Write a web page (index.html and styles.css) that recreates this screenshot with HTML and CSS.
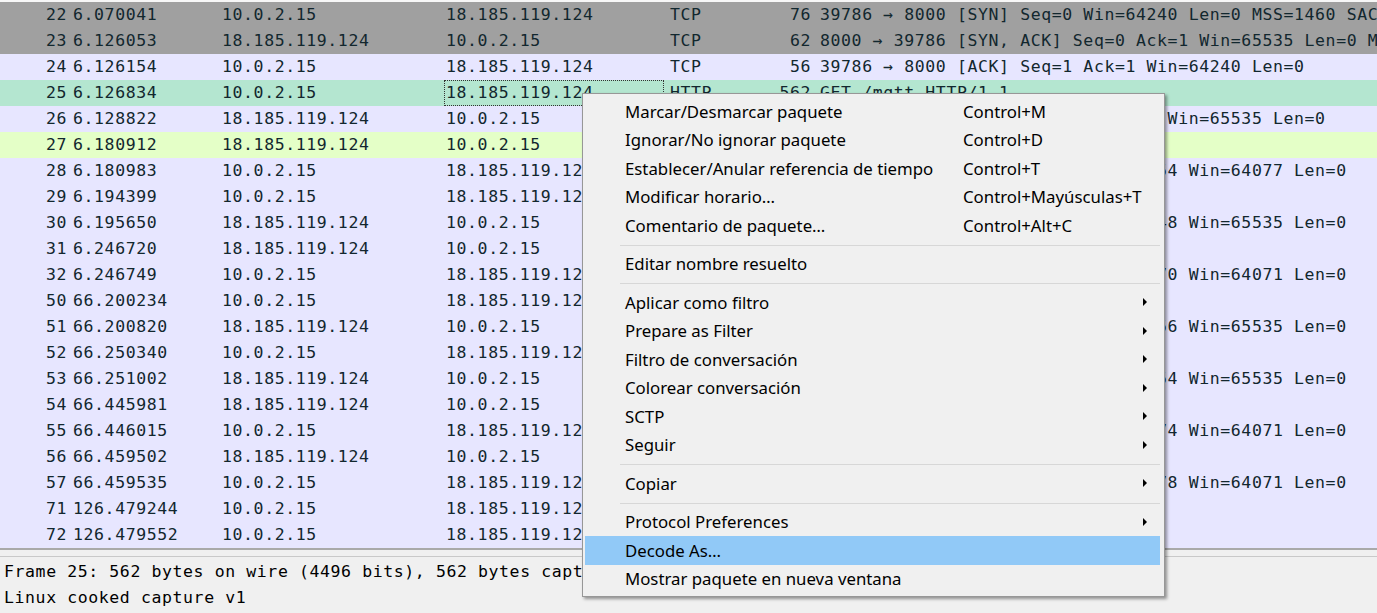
FILE: index.html
```html
<!DOCTYPE html>
<html lang="es">
<head>
<meta charset="utf-8">
<title>Wireshark</title>
<link rel="stylesheet" href="styles.css">
</head>
<body>
<div class="app">
  <div class="list-header"></div>
  <div class="list">
    <div class="row gray"><span class="c-no">22</span><span class="c-time">6.070041</span><span class="c-src">10.0.2.15</span><span class="c-dst">18.185.119.124</span><span class="c-proto">TCP</span><span class="c-len">76</span><span class="c-info">39786 → 8000 [SYN] Seq=0 Win=64240 Len=0 MSS=1460 SACK_PERM=1 TSval=3027401590 TSecr=0 WS=128</span></div>
    <div class="row gray"><span class="c-no">23</span><span class="c-time">6.126053</span><span class="c-src">18.185.119.124</span><span class="c-dst">10.0.2.15</span><span class="c-proto">TCP</span><span class="c-len">62</span><span class="c-info">8000 → 39786 [SYN, ACK] Seq=0 Ack=1 Win=65535 Len=0 MSS=1460</span></div>
    <div class="row tcp"><span class="c-no">24</span><span class="c-time">6.126154</span><span class="c-src">10.0.2.15</span><span class="c-dst">18.185.119.124</span><span class="c-proto">TCP</span><span class="c-len">56</span><span class="c-info">39786 → 8000 [ACK] Seq=1 Ack=1 Win=64240 Len=0</span></div>
    <div class="row selected"><span class="c-no">25</span><span class="c-time">6.126834</span><span class="c-src">10.0.2.15</span><span class="c-dst focus">18.185.119.124</span><span class="c-proto">HTTP</span><span class="c-len">562</span><span class="c-info">GET /mqtt HTTP/1.1</span></div>
    <div class="row tcp"><span class="c-no">26</span><span class="c-time">6.128822</span><span class="c-src">18.185.119.124</span><span class="c-dst">10.0.2.15</span><span class="c-proto">TCP</span><span class="c-len">54</span><span class="c-info">8000 → 39786 [ACK] Seq=1 Ack=507 Win=65535 Len=0</span></div>
    <div class="row http"><span class="c-no">27</span><span class="c-time">6.180912</span><span class="c-src">18.185.119.124</span><span class="c-dst">10.0.2.15</span><span class="c-proto">HTTP</span><span class="c-len">207</span><span class="c-info">HTTP/1.1 101 Switching Protocols</span></div>
    <div class="row tcp"><span class="c-no">28</span><span class="c-time">6.180983</span><span class="c-src">10.0.2.15</span><span class="c-dst">18.185.119.124</span><span class="c-proto">TCP</span><span class="c-len">56</span><span class="c-info">39786 → 8000 [ACK] Seq=507 Ack=154 Win=64077 Len=0</span></div>
    <div class="row tcp"><span class="c-no">29</span><span class="c-time">6.194399</span><span class="c-src">10.0.2.15</span><span class="c-dst">18.185.119.124</span><span class="c-proto">MQTT</span><span class="c-len">97</span><span class="c-info">Connect Command</span></div>
    <div class="row tcp"><span class="c-no">30</span><span class="c-time">6.195650</span><span class="c-src">18.185.119.124</span><span class="c-dst">10.0.2.15</span><span class="c-proto">TCP</span><span class="c-len">54</span><span class="c-info">8000 → 39786 [ACK] Seq=154 Ack=548 Win=65535 Len=0</span></div>
    <div class="row tcp"><span class="c-no">31</span><span class="c-time">6.246720</span><span class="c-src">18.185.119.124</span><span class="c-dst">10.0.2.15</span><span class="c-proto">MQTT</span><span class="c-len">70</span><span class="c-info">Connect Ack</span></div>
    <div class="row tcp"><span class="c-no">32</span><span class="c-time">6.246749</span><span class="c-src">10.0.2.15</span><span class="c-dst">18.185.119.124</span><span class="c-proto">TCP</span><span class="c-len">56</span><span class="c-info">39786 → 8000 [ACK] Seq=548 Ack=170 Win=64071 Len=0</span></div>
    <div class="row tcp"><span class="c-no">50</span><span class="c-time">66.200234</span><span class="c-src">10.0.2.15</span><span class="c-dst">18.185.119.124</span><span class="c-proto">MQTT</span><span class="c-len">64</span><span class="c-info">Ping Request</span></div>
    <div class="row tcp"><span class="c-no">51</span><span class="c-time">66.200820</span><span class="c-src">18.185.119.124</span><span class="c-dst">10.0.2.15</span><span class="c-proto">TCP</span><span class="c-len">54</span><span class="c-info">8000 → 39786 [ACK] Seq=170 Ack=556 Win=65535 Len=0</span></div>
    <div class="row tcp"><span class="c-no">52</span><span class="c-time">66.250340</span><span class="c-src">10.0.2.15</span><span class="c-dst">18.185.119.124</span><span class="c-proto">MQTT</span><span class="c-len">64</span><span class="c-info">Ping Request</span></div>
    <div class="row tcp"><span class="c-no">53</span><span class="c-time">66.251002</span><span class="c-src">18.185.119.124</span><span class="c-dst">10.0.2.15</span><span class="c-proto">TCP</span><span class="c-len">54</span><span class="c-info">8000 → 39786 [ACK] Seq=170 Ack=654 Win=65535 Len=0</span></div>
    <div class="row tcp"><span class="c-no">54</span><span class="c-time">66.445981</span><span class="c-src">18.185.119.124</span><span class="c-dst">10.0.2.15</span><span class="c-proto">MQTT</span><span class="c-len">58</span><span class="c-info">Ping Response</span></div>
    <div class="row tcp"><span class="c-no">55</span><span class="c-time">66.446015</span><span class="c-src">10.0.2.15</span><span class="c-dst">18.185.119.124</span><span class="c-proto">TCP</span><span class="c-len">56</span><span class="c-info">39786 → 8000 [ACK] Seq=654 Ack=174 Win=64071 Len=0</span></div>
    <div class="row tcp"><span class="c-no">56</span><span class="c-time">66.459502</span><span class="c-src">18.185.119.124</span><span class="c-dst">10.0.2.15</span><span class="c-proto">MQTT</span><span class="c-len">58</span><span class="c-info">Ping Response</span></div>
    <div class="row tcp"><span class="c-no">57</span><span class="c-time">66.459535</span><span class="c-src">10.0.2.15</span><span class="c-dst">18.185.119.124</span><span class="c-proto">TCP</span><span class="c-len">56</span><span class="c-info">39786 → 8000 [ACK] Seq=654 Ack=178 Win=64071 Len=0</span></div>
    <div class="row tcp"><span class="c-no">71</span><span class="c-time">126.479244</span><span class="c-src">10.0.2.15</span><span class="c-dst">18.185.119.124</span><span class="c-proto">MQTT</span><span class="c-len">64</span><span class="c-info">Ping Request</span></div>
    <div class="row tcp"><span class="c-no">72</span><span class="c-time">126.479552</span><span class="c-src">10.0.2.15</span><span class="c-dst">18.185.119.124</span><span class="c-proto">MQTT</span><span class="c-len">64</span><span class="c-info">Ping Request</span></div>
  </div>
  <div class="splitter"></div>
  <div class="details">
    <div class="tree-line">Frame 25: 562 bytes on wire (4496 bits), 562 bytes captured (4496 bits) on interface 0</div>
    <div class="tree-line">Linux cooked capture v1</div>
  </div>

  <div class="menu">
    <div class="item"><span class="label">Marcar/Desmarcar paquete</span><span class="shortcut">Control+M</span></div>
    <div class="item"><span class="label">Ignorar/No ignorar paquete</span><span class="shortcut">Control+D</span></div>
    <div class="item"><span class="label">Establecer/Anular referencia de tiempo</span><span class="shortcut">Control+T</span></div>
    <div class="item"><span class="label">Modificar horario…</span><span class="shortcut">Control+Mayúsculas+T</span></div>
    <div class="item"><span class="label">Comentario de paquete…</span><span class="shortcut">Control+Alt+C</span></div>
    <div class="sep"></div>
    <div class="item"><span class="label">Editar nombre resuelto</span></div>
    <div class="sep"></div>
    <div class="item sub"><span class="label">Aplicar como filtro</span><span class="arrow"></span></div>
    <div class="item sub"><span class="label">Prepare as Filter</span><span class="arrow"></span></div>
    <div class="item sub"><span class="label">Filtro de conversación</span><span class="arrow"></span></div>
    <div class="item sub"><span class="label">Colorear conversación</span><span class="arrow"></span></div>
    <div class="item sub"><span class="label">SCTP</span><span class="arrow"></span></div>
    <div class="item sub"><span class="label">Seguir</span><span class="arrow"></span></div>
    <div class="sep"></div>
    <div class="item sub"><span class="label">Copiar</span><span class="arrow"></span></div>
    <div class="sep"></div>
    <div class="item sub"><span class="label">Protocol Preferences</span><span class="arrow"></span></div>
    <div class="item hover"><span class="label">Decode As…</span></div>
    <div class="item"><span class="label">Mostrar paquete en nueva ventana</span></div>
  </div>
</div>
</body>
</html>
```
FILE: styles.css
```css
* { box-sizing: border-box; }
html, body {
  margin: 0;
  padding: 0;
  width: 1377px;
  height: 613px;
  overflow: hidden;
  background: #f0f0f0;
}
.app {
  position: relative;
  width: 1377px;
  height: 613px;
  display: flex;
  flex-direction: column;
}
.list-header {
  height: 2px;
  background: #f7f7f7;
  flex: none;
}
.list {
  flex: none;
  display: flex;
  flex-direction: column;
}
.row {
  display: grid;
  grid-template-columns: 70px 148px 224px 225px 85px 63px 1fr;
  height: 26px;
  line-height: 26px;
  white-space: nowrap;
  overflow: hidden;
  font-family: "DejaVu Sans Mono", monospace;
  font-size: 16.5px;
  letter-spacing: 0.6px;
  color: #12272e;
}
.row > span { overflow: hidden; }
.row .c-info { overflow: visible; }
.gray { background: #a0a0a0; }
.tcp { background: #e7e6ff; }
.http { background: #e4ffc7; }
.selected { background: #b4e6d0; }
.c-no { text-align: right; padding-right: 3px; }
.c-time { padding-left: 3px; }
.c-src { padding-left: 4px; }
.c-dst { padding-left: 4px; }
.c-proto { padding-left: 3px; }
.c-len { text-align: right; padding-right: 4px; }
.c-info { padding-left: 5px; }
.focus {
  outline: 1px dotted #333;
  outline-offset: -1px;
  margin: 0 3px 0 2px;
  padding-left: 2px;
}
.splitter {
  flex: none;
  height: 9px;
  border-top: 2px solid #a9a9a9;
  border-bottom: 1px solid #c9c9c9;
  background: #f0f0f0;
}
.details {
  flex: 1;
  padding-top: 2px;
  background: #f0f0f0;
  font-family: "DejaVu Sans Mono", monospace;
  font-size: 16.5px;
  letter-spacing: 0.6px;
  color: #000;
}
.tree-line {
  height: 26px;
  line-height: 26px;
  padding-left: 4px;
  white-space: nowrap;
}
.menu {
  position: absolute;
  left: 582px;
  top: 93px;
  width: 583px;
  padding: 3px 0;
  background: #f0f0f0;
  border: 1px solid #979797;
  box-shadow: 2px 2px 3px rgba(0, 0, 0, 0.4);
  font-family: "Noto Sans", sans-serif;
  font-size: 16.8px;
  color: #000;
}
.item {
  display: flex;
  align-items: center;
  height: 28.5px;
  margin: 0 4px 0 2px;
  padding: 0 13px 0 40px;
  white-space: nowrap;
}
.item.hover { background: #91c9f7; }
.label { width: 338px; flex: none; }
.shortcut { flex: none; }
.arrow {
  margin-left: auto;
  width: 0;
  height: 0;
  border-top: 4px solid transparent;
  border-bottom: 4px solid transparent;
  border-left: 4px solid #000;
}
.sep {
  height: 1px;
  background: #d7d7d7;
  margin: 5px 4px 4px 37px;
}
```
